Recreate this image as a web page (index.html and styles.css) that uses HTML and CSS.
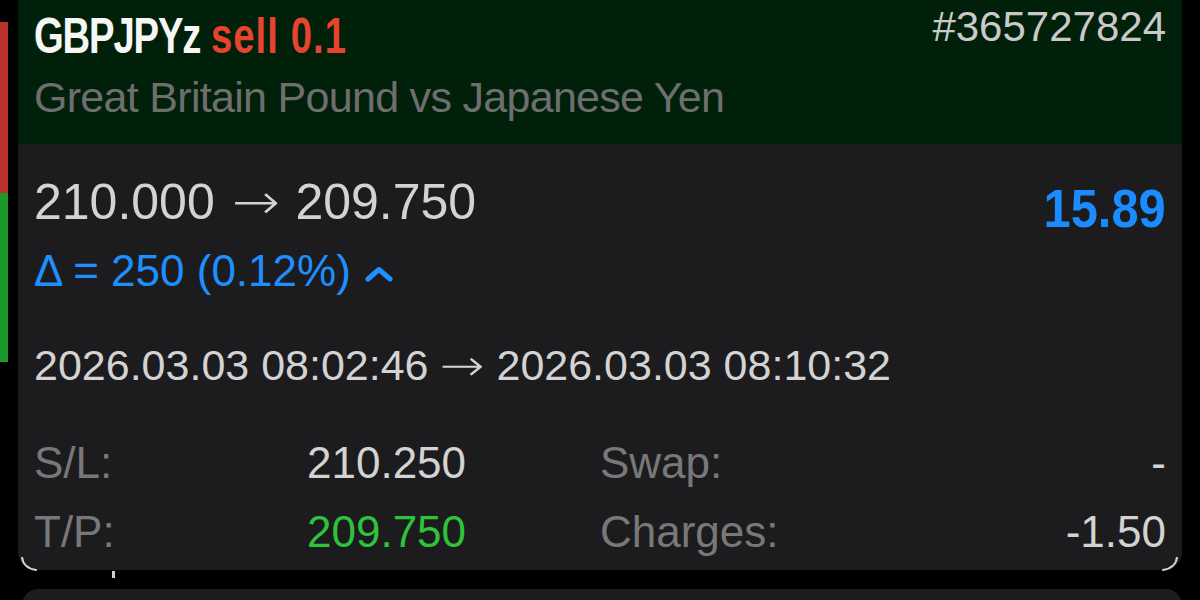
FILE: index.html
```html
<!DOCTYPE html>
<html>
    <head>
        <meta charset="utf-8">
        <title>Trade</title>
        <link rel="stylesheet" href="styles.css">
    </head>
    <body>
        <div class="screen">
            <div class="side">
                <div class="side-red"></div>
                <div class="side-green"></div>
            </div>
            <div class="list">
                <div class="card-wrap">
                    <div class="card">
                        <div class="head">
                            <div class="head-row">
                                <div class="title"><span class="sym">GBPJPYz</span> <span class="sell">sell 0.1</span></div>
                                <div class="ticket">#365727824</div>
                            </div>
                            <div class="desc">Great Britain Pound vs Japanese Yen</div>
                        </div>
                        <div class="body">
                            <div class="price-row">
                                <div class="prices">210.000 <span class="arr">→</span> 209.750</div>
                                <div class="profit">15.89</div>
                            </div>
                            <div class="delta">Δ = 250 (0.12%)<svg class="chev" width="28" height="16" viewBox="0 0 28 16"><polyline points="3,13 14,3.5 25,13" fill="none" stroke="#1e8fff" stroke-width="5" stroke-linecap="round" stroke-linejoin="round"/></svg></div>
                            <div class="times">2026.03.03 08:02:46 <span class="arr">→</span> 2026.03.03 08:10:32</div>
                            <div class="stats">
                                <div class="lbl">S/L:</div>
                                <div class="val">210.250</div>
                                <div class="lbl lbl2">Swap:</div>
                                <div class="val">-</div>
                                <div class="lbl">T/P:</div>
                                <div class="val green">209.750</div>
                                <div class="lbl lbl2">Charges:</div>
                                <div class="val">-1.50</div>
                            </div>
                        </div>
                    </div>
                    <!-- glints of the row underneath the popup -->
                    <svg class="glint glint-l" width="18" height="14" viewBox="0 0 18 14"><path d="M2 0 Q3 11 16 13" fill="none" stroke="#d2d2d2" stroke-width="2" stroke-linecap="round"/></svg>
                    <svg class="glint glint-r" width="18" height="14" viewBox="0 0 18 14"><path d="M16 0 Q15 11 2 13" fill="none" stroke="#d2d2d2" stroke-width="2" stroke-linecap="round"/></svg>
                    <div class="ghost-mark"></div>
                </div>
                <div class="card next"></div>
            </div>
        </div>
    </body>
</html>
```

FILE: styles.css
```css
body {margin:0; background:#000; font-family:"Liberation Sans", Arial, sans-serif; overflow:hidden;}
.screen {display:flex; height:600px;}
.side {width:8px; padding-top:22px; display:flex; flex-direction:column; flex:none;}
.side-red {height:171px; background:#b9332a;}
.side-green {height:169px; background:#1b9a2b;}
.list {flex:1; margin-left:10px; margin-right:18px;}

.card-wrap {position:relative;}
.glint {position:absolute; bottom:-1px;}
.glint-l {left:2px;}
.glint-r {right:3px;}
.ghost-mark {position:absolute; left:94px; top:100%; margin-top:1px; width:3px; height:7px; background:#cfcfcf;}
.card {background:#1c1c1e; border-radius:0 0 18px 18px; overflow:hidden;}
.card.next {margin-top:19px; margin-left:4px; height:40px; border-radius:16px 16px 0 0;}

.head {background:#01200a; height:144px; box-sizing:border-box; padding:10px 16px 0 16px;}
.head-row {display:flex; justify-content:space-between; align-items:flex-start;}
.title {font-weight:bold; font-size:50px; line-height:52px; white-space:nowrap; transform:scaleX(0.765); transform-origin:left top;}
.sym {color:#f6f6f6; letter-spacing:-1.5px;}
.sell {color:#e6442f; letter-spacing:1.4px;}
.ticket {color:#c9c9c9; font-size:42px; line-height:42px; margin-top:-4px;}
.desc {color:#6e6e6e; font-size:43px; line-height:50px; letter-spacing:-0.7px; margin-top:10px;}

.body {padding:28px 16px 4px 16px;}
.price-row {display:flex; justify-content:space-between; align-items:flex-start;}
.prices {color:#d3d3d3; font-size:50px; line-height:56px;}
.arr {display:inline-block; font-family:"Noto Sans", "DejaVu Sans", sans-serif; font-weight:300;}
.prices .arr {transform:scaleX(1.15); margin:0 5px 0 6px;}
.profit {color:#1b8cff; font-weight:bold; font-size:53px; line-height:56px; margin-top:9px; transform:scaleX(0.92); transform-origin:right top;}
.delta {color:#1e8fff; font-size:44px; line-height:50px; margin-top:9px;}
.chev {margin-left:14px; vertical-align:4px;}
.times {color:#d3d3d3; font-size:43px; line-height:50px; margin-top:43px;}
.times .arr {transform:scaleX(1.25); margin:0 4px 0 4px;}

.stats {display:grid; grid-template-columns:273px 158px 1fr auto; margin-top:38px; font-size:44px; line-height:69px;}
.lbl {color:#787878;}
.lbl2 {padding-left:135px;}
.val {color:#d3d3d3; text-align:right;}
.green {color:#2fc23c;}
```
